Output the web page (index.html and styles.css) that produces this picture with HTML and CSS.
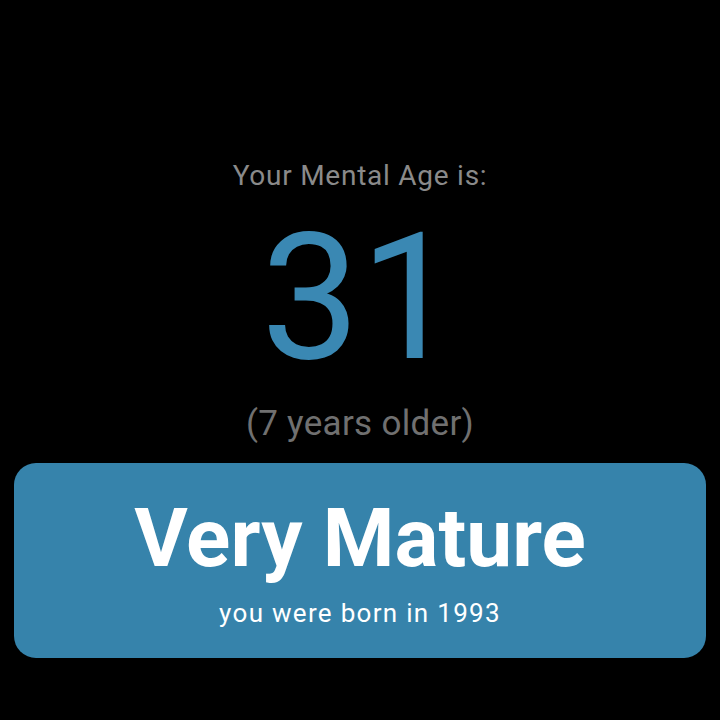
FILE: index.html
```html
<!DOCTYPE html>
<html lang="en">
<head>
    <meta charset="UTF-8">
    <meta name="viewport" content="width=device-width, initial-scale=1.0">
    <title>Mental Age</title>
    <link rel="stylesheet" href="styles.css">
</head>
<body>
    <!-- Resultado de la prueba -->
    <div class="result">
        <div class="label">Your Mental Age is:</div>
        <div class="age">31</div>
        <div class="diff">(7 years older)</div>
        <div class="card">
            <div class="verdict">Very Mature</div>
            <div class="born">you were born in 1993</div>
        </div>
    </div>
</body>
</html>
```

FILE: styles.css
```css
html, body {
    margin: 0;
    height: 100%;
    background-color: #000;
}

body {
    font-family: Roboto, "Noto Sans", sans-serif;
}

.result {
    display: flex;
    flex-direction: column;
    align-items: center;
    padding: 159px 14px 0;
}

.label {
    font-size: 28px;
    line-height: 34px;
    letter-spacing: 0.75px;
    color: #8a8a8a;
}

.age {
    margin-top: 17px;
    font-size: 176px;
    line-height: 176px;
    color: #3a88b3;
}

.diff {
    margin-top: 18px;
    font-size: 35px;
    line-height: 40px;
    letter-spacing: 0.3px;
    color: #707070;
}

.card {
    align-self: stretch;
    margin-top: 19px;
    padding: 33px 0 30px;
    background-color: #3683ab;
    border-radius: 22px;
    color: #fff;
    text-align: center;
}

.verdict {
    font-size: 82px;
    line-height: 84px;
    font-weight: bold;
}

.born {
    margin-top: 18px;
    font-size: 26px;
    line-height: 30px;
    letter-spacing: 1.3px;
}
```
